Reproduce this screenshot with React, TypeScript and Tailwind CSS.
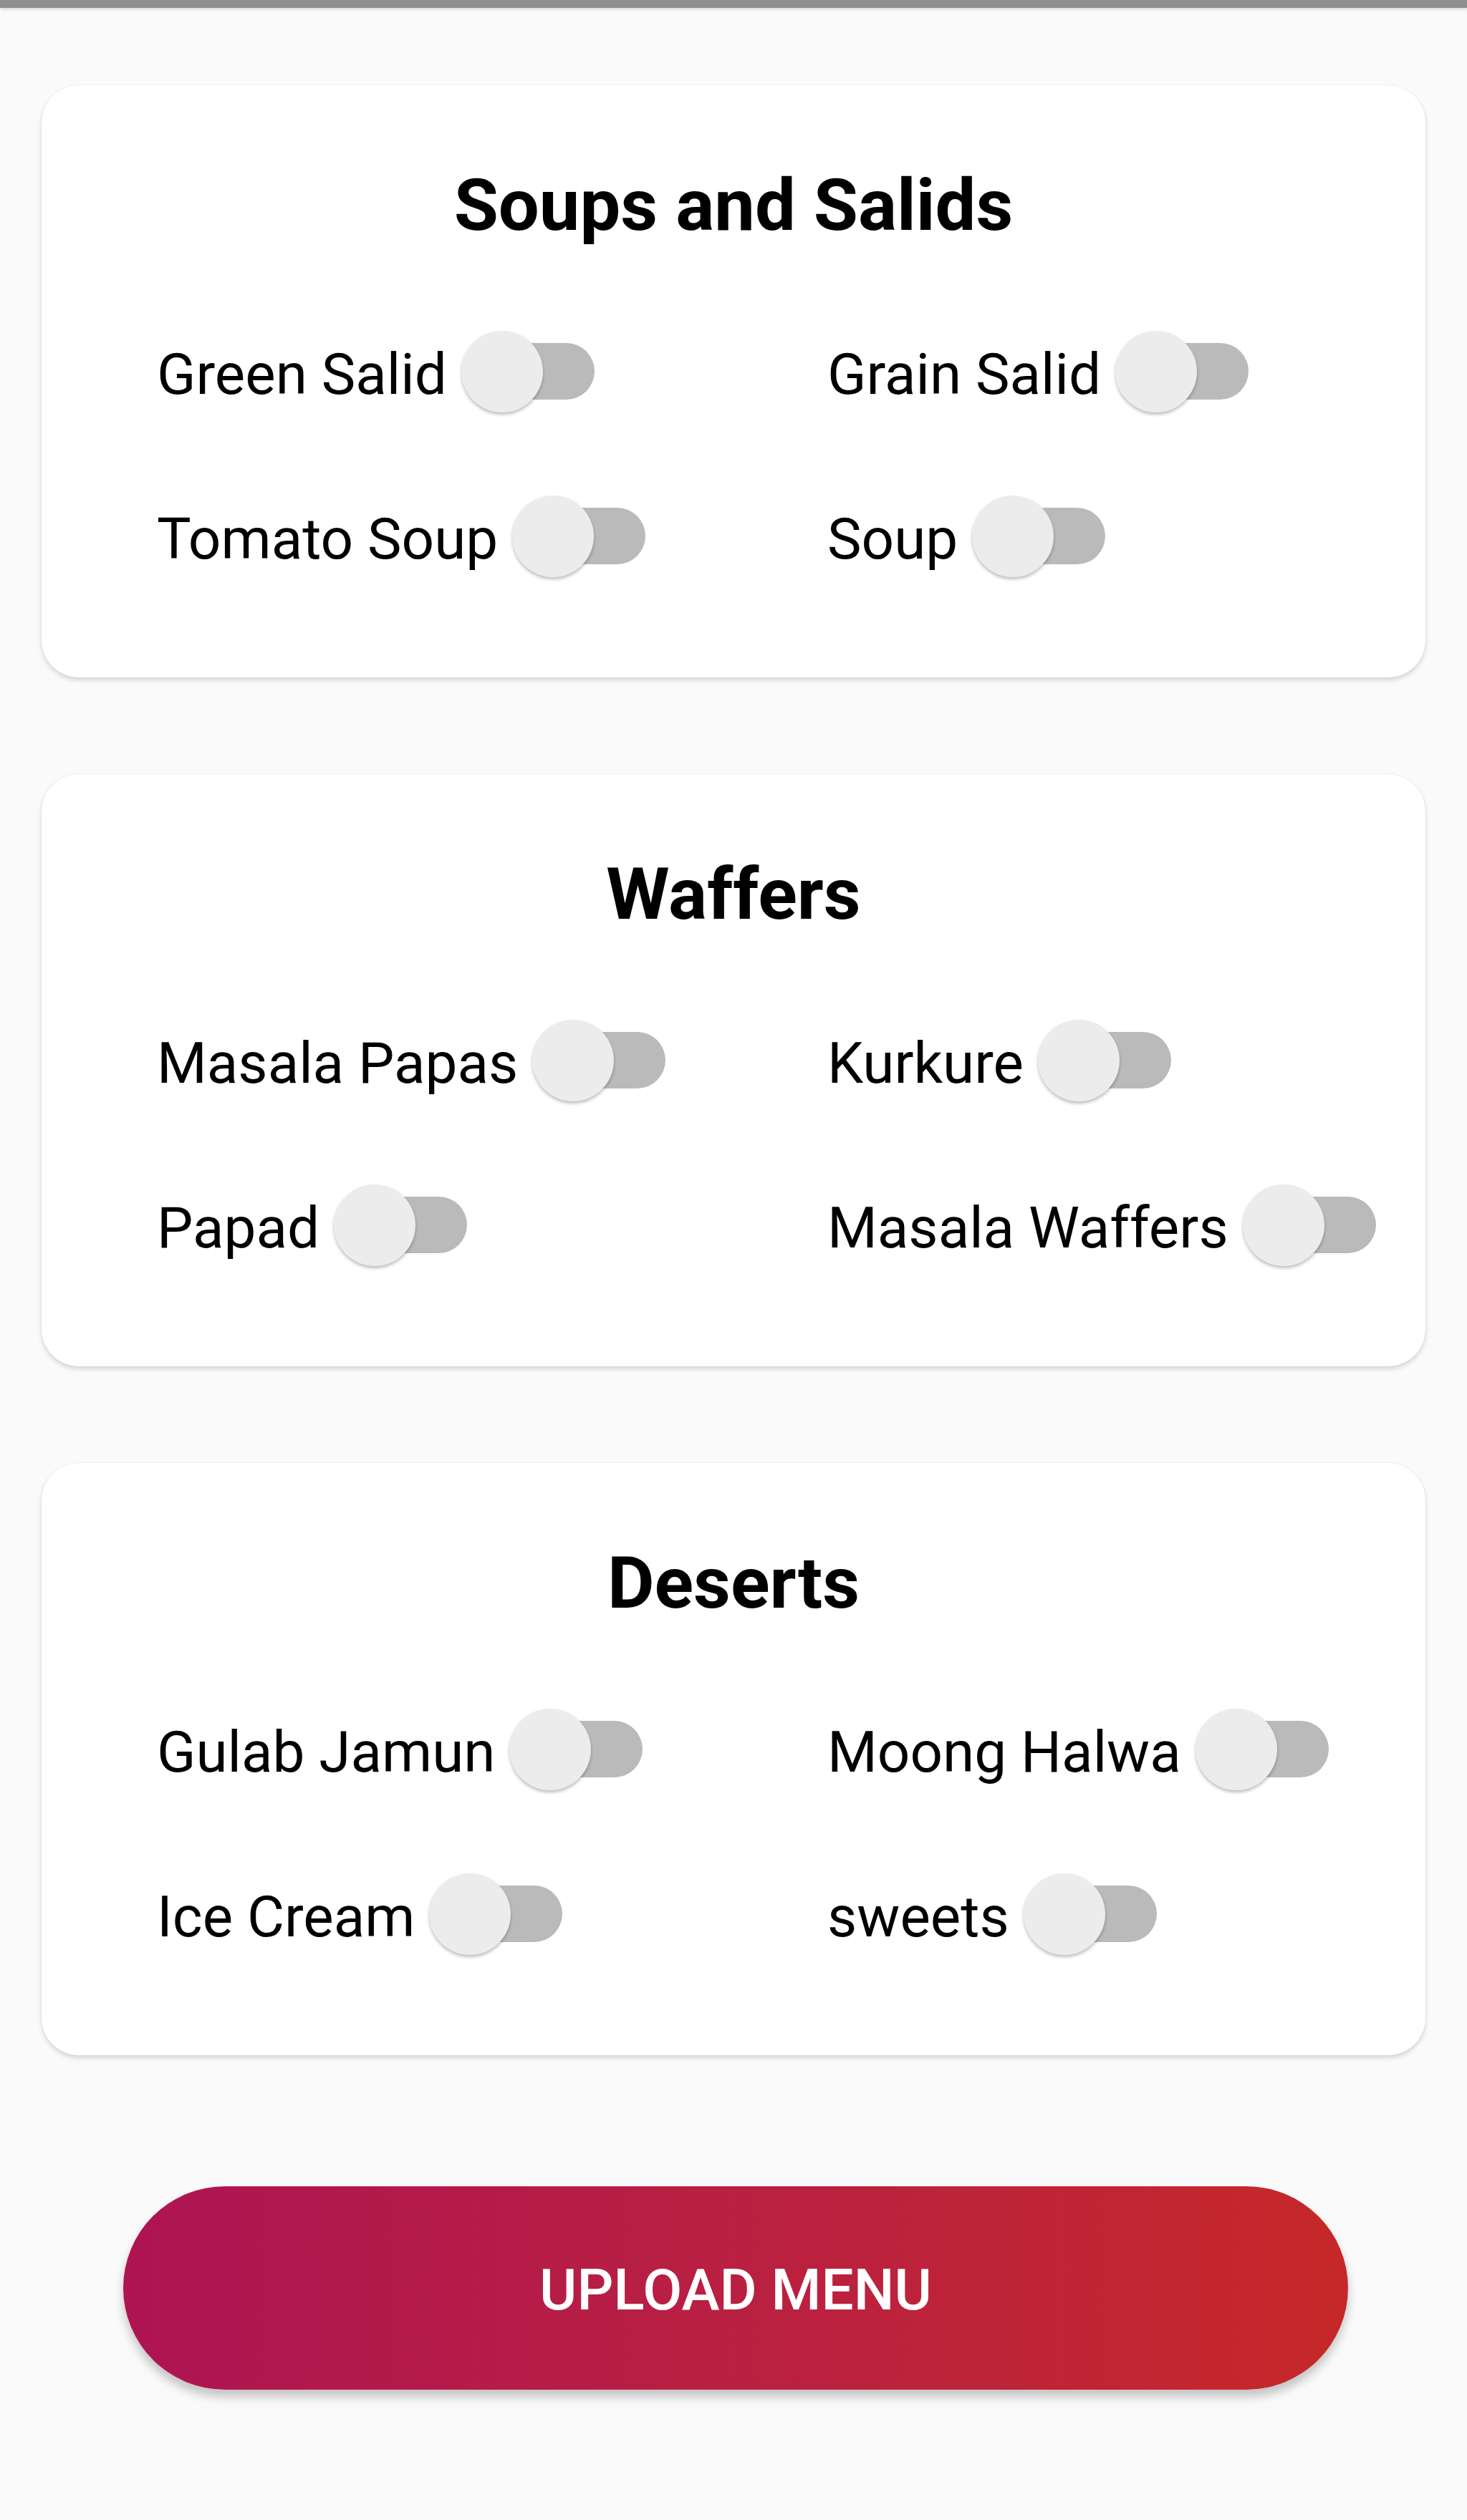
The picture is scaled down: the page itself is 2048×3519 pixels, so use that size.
const sections = [
  {
    title: "Soups and Salids",
    items: ["Green Salid", "Grain Salid", "Tomato Soup", "Soup"],
  },
  {
    title: "Waffers",
    items: ["Masala Papas", "Kurkure", "Papad", "Masala Waffers"],
  },
  {
    title: "Deserts",
    items: ["Gulab Jamun", "Moong Halwa", "Ice Cream", "sweets"],
  },
];

function Toggle() {
  return (
    <div className="relative ml-[20px] h-[116px] w-[186px] shrink-0">
      <div className="absolute right-0 top-[18px] h-[79px] w-[170px] rounded-full bg-[#bababa]" />
      <div className="absolute left-0 top-[1px] h-[114px] w-[114px] rounded-full bg-[#ececec] shadow-[0_3px_4px_rgba(0,0,0,0.25)]" />
    </div>
  );
}

function MenuCard({ title, items }: { title: string; items: string[] }) {
  return (
    <div className="mx-[58px] h-[827px] rounded-[52px] bg-white pt-[108px] shadow-[0_4px_6px_rgba(0,0,0,0.14),0_0_2px_rgba(0,0,0,0.1)]">
      <h2 className="text-center text-[101px] font-bold leading-[120px] text-black">
        {title}
      </h2>
      <div className="mt-[114px] grid grid-cols-[936px_1fr] gap-y-[114px] pl-[161px]">
        {items.map((item) => (
          <div key={item} className="flex h-[116px] items-center">
            <span className="pt-[8px] text-[80px] leading-none text-black">{item}</span>
            <Toggle />
          </div>
        ))}
      </div>
    </div>
  );
}

export default function App() {
  return (
    <div className="min-h-[3519px] bg-[#fafafa] font-['Roboto',sans-serif]">
      <div className="h-[11px] bg-[#8f8f8f] shadow-[0_2px_4px_rgba(0,0,0,0.15)]" />

      <div className="mt-[108px] flex flex-col gap-[135px]">
        {sections.map((s) => (
          <MenuCard key={s.title} title={s.title} items={s.items} />
        ))}
      </div>

      <div className="mt-[183px] flex justify-center pl-[6px]">
        <button className="h-[284px] w-[1710px] rounded-full bg-gradient-to-r from-[#ad1452] to-[#c62828] pt-[6px] text-[80px] font-medium text-white shadow-[0_10px_14px_rgba(0,0,0,0.22)]">
          UPLOAD MENU
        </button>
      </div>
    </div>
  );
}
